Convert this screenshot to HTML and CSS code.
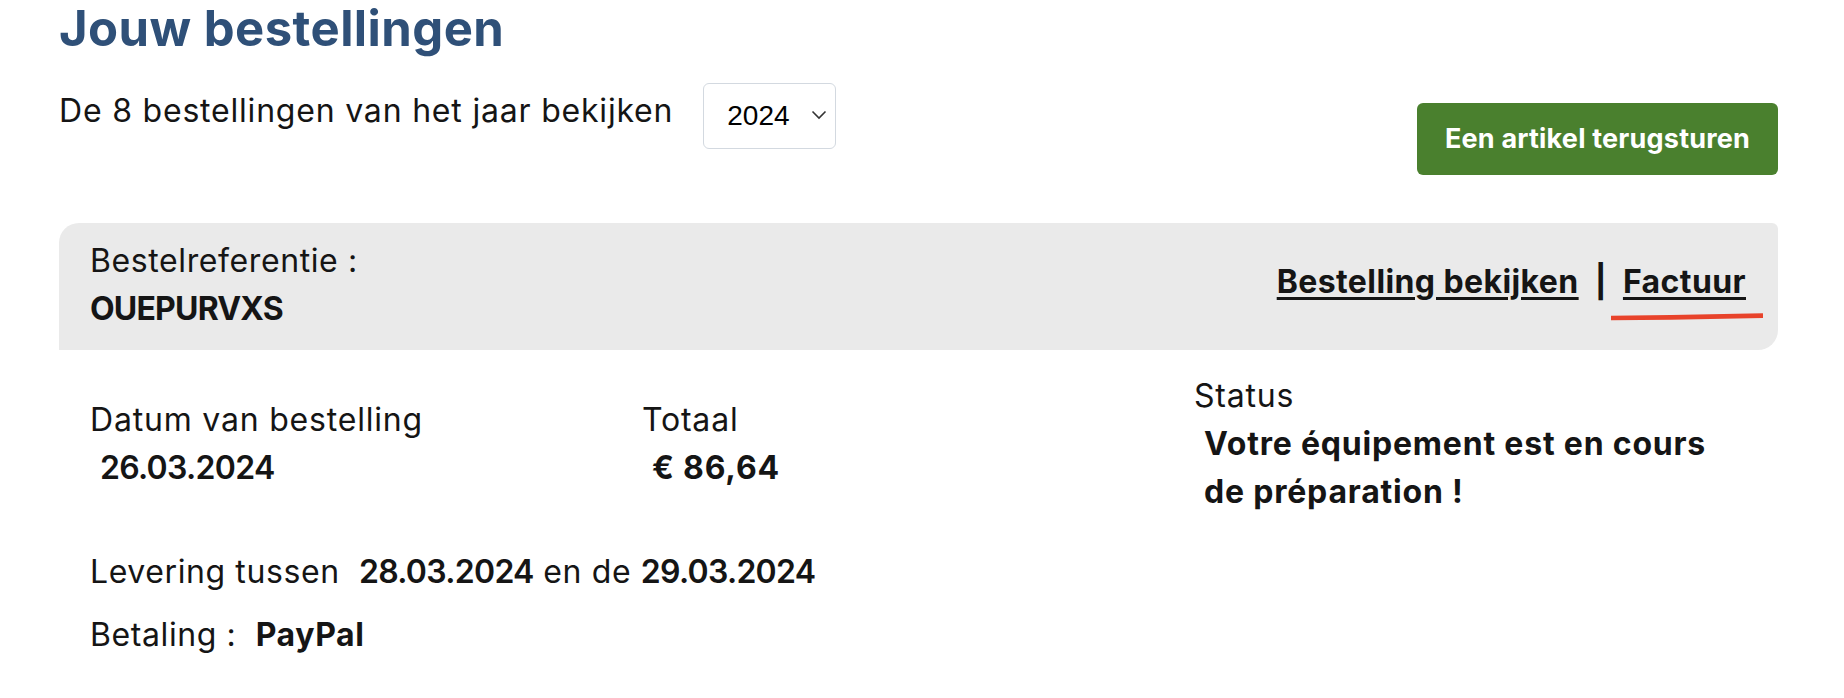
FILE: index.html
```html
<!DOCTYPE html>
<html lang="nl">
<head>
<meta charset="utf-8">
<title>Jouw bestellingen</title>
<link rel="stylesheet" href="styles.css">
</head>
<body>
<main class="page">
  <h1 class="page-title">Jouw bestellingen</h1>

  <div class="toolbar">
    <div class="year-filter">
      <span class="year-label">De 8 bestellingen van het jaar bekijken</span>
      <div class="year-select">
        <span class="year-value">2024</span>
        <svg class="chevron" width="16" height="10" viewBox="0 0 16 10" aria-hidden="true">
          <path d="M1.5 1.5 L8 8 L14.5 1.5" fill="none" stroke="#333" stroke-width="1.6"/>
        </svg>
      </div>
    </div>
    <a class="btn-return" href="#">Een artikel terugsturen</a>
  </div>

  <section class="order">
    <header class="order-head">
      <div class="order-ref">
        <div>Bestelreferentie :</div>
        <div class="strong ref-code">OUEPURVXS</div>
      </div>
      <div class="order-links">
        <a href="#" class="link">Bestelling bekijken</a>
        <span class="sep">|</span>
        <span class="invoice">
          <a href="#" class="link">Factuur</a>
          <svg class="mark" width="152" height="10" viewBox="0 0 152 10" aria-hidden="true">
            <path d="M0 7 L60 6.4 L152 4.6" fill="none" stroke="#e8432b" stroke-width="4.6"/>
          </svg>
        </span>
      </div>
    </header>

    <div class="order-body">
      <div class="order-grid">
        <div class="cell cell-low">
          <div>Datum van bestelling</div>
          <div class="strong indent date">26.03.2024</div>
        </div>
        <div class="cell cell-low">
          <div>Totaal</div>
          <div class="strong indent">€ 86,64</div>
        </div>
        <div class="cell">
          <div>Status</div>
          <div class="strong indent">Votre équipement est en cours<br>de préparation !</div>
        </div>
      </div>
      <p class="line line-delivery">Levering tussen&nbsp; <span class="strong date">28.03.2024</span> en de <span class="strong date">29.03.2024</span></p>
      <p class="line">Betaling :&nbsp; <span class="strong">PayPal</span></p>
    </div>
  </section>
</main>
</body>
</html>
```

FILE: styles.css
```css
* { box-sizing: border-box; }

html, body {
  margin: 0;
  background: #ffffff;
}

body {
  font-family: "Inter", "DejaVu Sans", sans-serif;
  font-size: 32px;
  line-height: 48px;
  color: #151515;
  letter-spacing: 0.8px;
}

.page {
  width: 1719px;
  margin-left: 59px;
}

.page-title {
  margin: 0;
  font-size: 49px;
  line-height: 58px;
  font-weight: 700;
  color: #2f5078;
  letter-spacing: 0.45px;
}

.toolbar {
  margin-top: 25px;
  display: flex;
  justify-content: space-between;
  align-items: flex-start;
}

.year-filter {
  display: flex;
  align-items: flex-start;
  gap: 30px;
}

.year-label {
  margin-top: 4px;
}

.year-select {
  width: 133px;
  height: 66px;
  border: 1px solid #d3d9e0;
  border-radius: 6px;
  background: #fff;
  display: flex;
  align-items: center;
  justify-content: space-between;
  padding: 0 8px 0 23px;
}

.year-value {
  font-family: "Liberation Sans", Arial, sans-serif;
  font-size: 28px;
  letter-spacing: 0;
  color: #000;
}

.chevron {
  margin-bottom: 2px;
}

.btn-return {
  margin-top: 20px;
  height: 72px;
  width: 361px;
  display: flex;
  align-items: center;
  justify-content: center;
  background: #4a802e;
  color: #fff;
  border-radius: 6px;
  font-size: 27px;
  font-weight: 700;
  letter-spacing: 0.2px;
  text-decoration: none;
}

.order {
  margin-top: 48px;
}

.order-head {
  background: #eaeaea;
  border-radius: 20px 6px 20px 0;
  padding: 14px 32px 17px 31px;
  display: flex;
  justify-content: space-between;
  align-items: center;
}

.order-ref {
  letter-spacing: 0.6px;
}

.strong {
  font-weight: 700;
}

.ref-code {
  letter-spacing: -0.8px;
}

.date {
  font-weight: 600;
  letter-spacing: -0.7px;
}

.order-links {
  display: flex;
  align-items: center;
  font-weight: 700;
  letter-spacing: 0.4px;
  margin-bottom: 6px;
}

.link {
  color: #151515;
  text-decoration: underline;
  text-decoration-thickness: 3px;
  text-underline-offset: 4px;
}

.sep {
  margin: 0 16px;
}

.invoice {
  position: relative;
}

.mark {
  position: absolute;
  left: -12px;
  top: 53px;
}

.order-body {
  padding: 22px 32px 0 31px;
}

.order-grid {
  display: grid;
  grid-template-columns: repeat(3, 1fr);
}

.cell-low {
  padding-top: 24px;
}

.indent {
  padding-left: 10px;
}

.line {
  margin: 0;
  letter-spacing: 0.6px;
}

.line-delivery {
  margin-top: 32px;
  margin-bottom: 15px;
}
```
